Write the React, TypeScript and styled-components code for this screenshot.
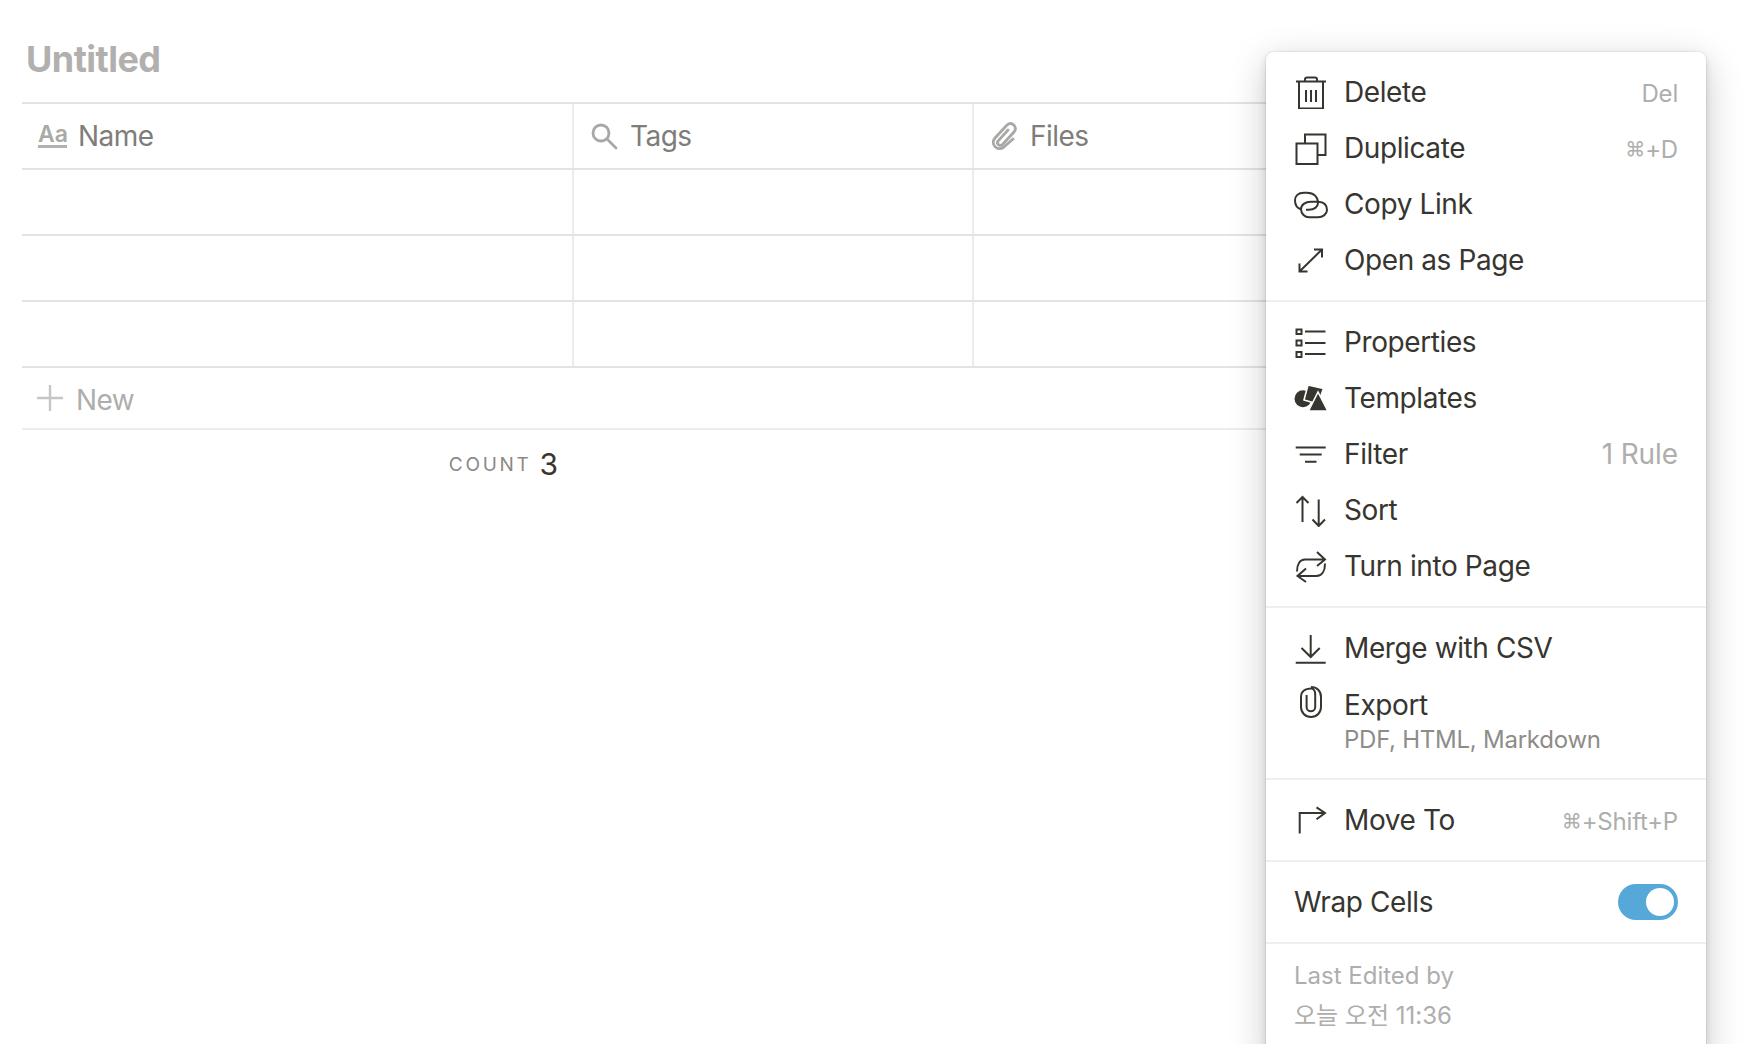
import React from "react";
import styled, { createGlobalStyle } from "styled-components";

const Global = createGlobalStyle`
  html, body { margin: 0; padding: 0; background: #fff; }
  body { font-family: Inter, "Noto Sans CJK KR", "DejaVu Sans", sans-serif; -webkit-font-smoothing: antialiased; }
`;

const Page = styled.div`
  position: relative;
  width: 1764px;
  height: 1044px;
  overflow: hidden;
  padding-left: 22px;
  box-sizing: border-box;
`;

const Title = styled.h1`
  margin: 0;
  height: 102px;
  padding: 37px 0 0 4px;
  box-sizing: border-box;
  font-size: 36px;
  line-height: 45px;
  font-weight: 700;
  letter-spacing: -0.55px;
  color: #b1b0ae;
`;

const Table = styled.div`
  width: 1480px;
`;

const Row = styled.div`
  display: grid;
  grid-template-columns: 550px 400px 1fr;
  height: 66px;
  border-top: 2px solid #e3e3e2;
  box-sizing: border-box;
`;

const Cell = styled.div`
  display: flex;
  align-items: center;
  gap: 11px;
  padding-left: ${(p: { $first?: boolean }) => (p.$first ? "14px" : "15px")};
  border-left: ${(p: { $first?: boolean }) => (p.$first ? "none" : "2px solid #ececeb")};
  font-size: 28px;
  letter-spacing: -0.55px;
  color: #7e7d7a;
`;

const Aa = styled.span`
  display: block;
  width: 29px;
  margin-left: 2px;
  font-size: 23px;
  line-height: 19px;
  height: 20px;
  font-weight: 600;
  letter-spacing: 0;
  color: #a9a9a7;
  border-bottom: 3px solid #b1b1af;
`;

const HeaderIcon = styled.svg`
  width: 30px;
  height: 30px;
  flex: none;
  fill: none;
  stroke: #a8a8a6;
  stroke-width: 2.8;
  stroke-linecap: round;
`;

const NewRow = styled.div`
  display: flex;
  align-items: center;
  gap: 12px;
  height: 62px;
  padding: 3px 0 0 14px;
  box-sizing: border-box;
  border-top: 2px solid #e3e3e2;
  font-size: 28px;
  letter-spacing: -0.55px;
  color: #aeaeac;
`;

const PlusIcon = styled.svg`
  width: 28px;
  height: 28px;
  margin-top: -3px;
  stroke: #c6c6c4;
  stroke-width: 2.4;
  fill: none;
`;

const CountRow = styled.div`
  display: flex;
  align-items: center;
  justify-content: flex-end;
  gap: 8px;
  width: 100%;
  height: 72px;
  padding: 0 944px 2px 0;
  border-top: 2px solid #ececeb;
  box-sizing: border-box;
`;

const CountLabel = styled.span`
  font-size: 19px;
  letter-spacing: 2.7px;
  color: #8a8987;
`;

const CountValue = styled.span`
  font-size: 30px;
  color: #37352f;
`;

const Menu = styled.div`
  position: absolute;
  left: 1266px;
  top: 52px;
  width: 440px;
  background: #fff;
  border-radius: 8px;
  box-shadow: 0 0 0 1px rgba(15, 15, 15, 0.05), 0 4px 8px rgba(15, 15, 15, 0.12), 0 10px 36px rgba(15, 15, 15, 0.22);
  color: #37352f;
`;

const Section = styled.div`
  padding: 12px 0;
  & + & { border-top: 2px solid #eeeeed; }
`;

const Item = styled.div`
  display: flex;
  align-items: center;
  height: 56px;
  padding: 0 28px;
`;

const ExportItem = styled.div`
  display: flex;
  align-items: flex-start;
  height: 90px;
  padding: 9px 28px 0;
  box-sizing: border-box;
`;

const Icon = styled.svg`
  width: 34px;
  height: 34px;
  flex: none;
  margin-right: 16px;
  fill: none;
  stroke: #37352f;
  stroke-width: 2;
`;

const Label = styled.span`
  flex: 1;
  font-size: 28px;
  line-height: 40px;
  letter-spacing: -0.4px;
  color: #37352f;
`;

const Hint = styled.span`
  font-size: 24px;
  padding-top: 2px;
  letter-spacing: -0.2px;
  color: #aeaeac;
`;

const RuleHint = styled.span`
  font-size: 28px;
  letter-spacing: -0.1px;
  color: #aeaeac;
`;

const Cmd = styled.span`
  font-size: 20px;
  vertical-align: 2px;
`;

const Sub = styled.div`
  font-size: 24px;
  line-height: 30px;
  letter-spacing: -0.25px;
  color: #8d8c89;
`;

const Toggle = styled.div`
  width: 60px;
  height: 36px;
  border-radius: 18px;
  background: #56a8d8;
  display: flex;
  align-items: center;
  justify-content: flex-end;
  padding-right: 4px;
  box-sizing: border-box;
`;

const Knob = styled.div`
  width: 28px;
  height: 28px;
  border-radius: 50%;
  background: #fff;
`;

const Footer = styled.div`
  padding: 12px 28px 24px;
  border-top: 2px solid #eeeeed;
  font-size: 24px;
  line-height: 40px;
  color: #aeaeac;
`;

const box = "0 -1 34 34";

const Trash = () => (
  <Icon viewBox={box}>
    <path d="M2 5.5H32M5 5.5V32.5H29V5.5M11 5.5V3.5Q11 1.5 13 1.5H21Q23 1.5 23 3.5V5.5M12 14V26M17 14V26M22 14V26" />
  </Icon>
);
const Copy = () => (
  <Icon viewBox={box}>
    <path d="M2.5 11.5H23.5V32H2.5ZM11 11V2.5H31.5V23H24" />
  </Icon>
);
const LinkIcon = () => (
  <Icon viewBox={box}>
    <path d="M24 15C24 9 20 4.7 13 4.7H10C4 4.7 1 8 1 12.5C1 17 3 20 7 21.3" />
    <path d="M7 21C7 17 11 13.7 17 13.7H24C30 14 33 17 33 22C33 26 29 29.3 24 29.3H15C11 29.3 7 26 7 21" />
    <path d="M24 15C24 19 20 21.7 15 21.7H12" />
  </Icon>
);
const Expand = () => (
  <Icon viewBox={box}>
    <path d="M5.5 27.5L28 5.5M20 5.5H28V13.5M5.5 19.5V27.5H13.5" />
  </Icon>
);
const Properties = () => (
  <Icon viewBox={box}>
    <path d="M2.5 3.5H7.5V8H2.5ZM2.5 14.5H7.5V19.5H2.5ZM2.5 26H7.5V31H2.5ZM11 5.5H31.5M11 17H31.5M11 28H31.5" />
  </Icon>
);
const Shapes = () => (
  <Icon viewBox={box} style={{ stroke: "none" }}>
    <circle cx="9" cy="16.7" r="8.5" fill="#37352f" />
    <path d="M14 3L29.5 6.5L24 22L10 18Z" fill="#37352f" stroke="#fff" strokeWidth="1.6" />
    <path d="M24 10L14.5 29H33.8Z" fill="#37352f" stroke="#fff" strokeWidth="1.6" />
  </Icon>
);
const FilterIcon = () => (
  <Icon viewBox={box}>
    <path d="M1.7 9.5H31.7M5.7 16.5H27.7M11 23.7H22.5" />
  </Icon>
);
const SortIcon = () => (
  <Icon viewBox={box}>
    <path d="M8.5 28V3M2.5 9L8.5 3L14.5 9M24.7 5.5V32M18.5 25.5L24.7 32L31 25.5" />
  </Icon>
);
const Turn = () => (
  <Icon viewBox={box}>
    <path d="M3 21.5C3 14 6 9.5 11 9.5H31M23 2L31 9.5L23 16M31 13.5C31 21 28 26 22.5 26H3.5M12 18.5L3.5 26L12 32" />
  </Icon>
);
const Download = () => (
  <Icon viewBox={box}>
    <path d="M16.7 3V25M7.5 16L16.7 25L25.7 16M1.7 30.7H31.7" />
  </Icon>
);
const Clip = () => (
  <Icon viewBox={box}>
    <path d="M12.6 9V21A4.3 4.3 0 0 0 21.2 21V8.5C21.2 5 19.5 2.5 16.9 2.5C14 2.5 7 3.5 7 11V21C7 26.5 11 31 17 31C23 31 27 26.5 27 21V11C27 5 23 1 17 1" />
  </Icon>
);
const MoveIcon = () => (
  <Icon viewBox={box}>
    <path d="M5.7 29.5V9H31M22.5 3.3L31 9L22.5 15.3" />
  </Icon>
);

export default function App() {
  return (
    <Page>
      <Global />
      <Title>Untitled</Title>
      <Table>
        <Row>
          <Cell $first>
            <Aa>Aa</Aa>
            Name
          </Cell>
          <Cell>
            <HeaderIcon viewBox="0 0 30 30">
              <circle cx="12" cy="12" r="8" />
              <path d="M18 18L27 27" />
            </HeaderIcon>
            Tags
          </Cell>
          <Cell>
            <HeaderIcon viewBox="0 0 30 30">
              <path d="M19 9L9 20C7 23 11 26 14 23L25 11C29 6 23 0 18 4L6 17C1 23 8 31 15 26L24 18" />
            </HeaderIcon>
            Files
          </Cell>
        </Row>
        {[0, 1, 2].map((i) => (
          <Row key={i}>
            <Cell $first />
            <Cell />
            <Cell />
          </Row>
        ))}
        <NewRow>
          <PlusIcon viewBox="0 0 28 28">
            <path d="M14 1V27M1 14H27" />
          </PlusIcon>
          New
        </NewRow>
        <CountRow>
          <CountLabel>COUNT</CountLabel>
          <CountValue>3</CountValue>
        </CountRow>
      </Table>
      <Menu>
        <Section>
          <Item><Trash /><Label>Delete</Label><Hint>Del</Hint></Item>
          <Item><Copy /><Label>Duplicate</Label><Hint><Cmd>⌘</Cmd>+D</Hint></Item>
          <Item><LinkIcon /><Label>Copy Link</Label></Item>
          <Item><Expand /><Label>Open as Page</Label></Item>
        </Section>
        <Section>
          <Item><Properties /><Label>Properties</Label></Item>
          <Item><Shapes /><Label>Templates</Label></Item>
          <Item><FilterIcon /><Label>Filter</Label><RuleHint>1 Rule</RuleHint></Item>
          <Item><SortIcon /><Label>Sort</Label></Item>
          <Item><Turn /><Label>Turn into Page</Label></Item>
        </Section>
        <Section>
          <Item><Download /><Label>Merge with CSV</Label></Item>
          <ExportItem>
            <Clip />
            <div>
              <Label>Export</Label>
              <Sub>PDF, HTML, Markdown</Sub>
            </div>
          </ExportItem>
        </Section>
        <Section>
          <Item><MoveIcon /><Label>Move To</Label><Hint><Cmd>⌘</Cmd>+Shift+P</Hint></Item>
        </Section>
        <Section>
          <Item><Label>Wrap Cells</Label><Toggle><Knob /></Toggle></Item>
        </Section>
        <Footer>
          <div>Last Edited by</div>
          <div>오늘 오전 11:36</div>
        </Footer>
      </Menu>
    </Page>
  );
}
